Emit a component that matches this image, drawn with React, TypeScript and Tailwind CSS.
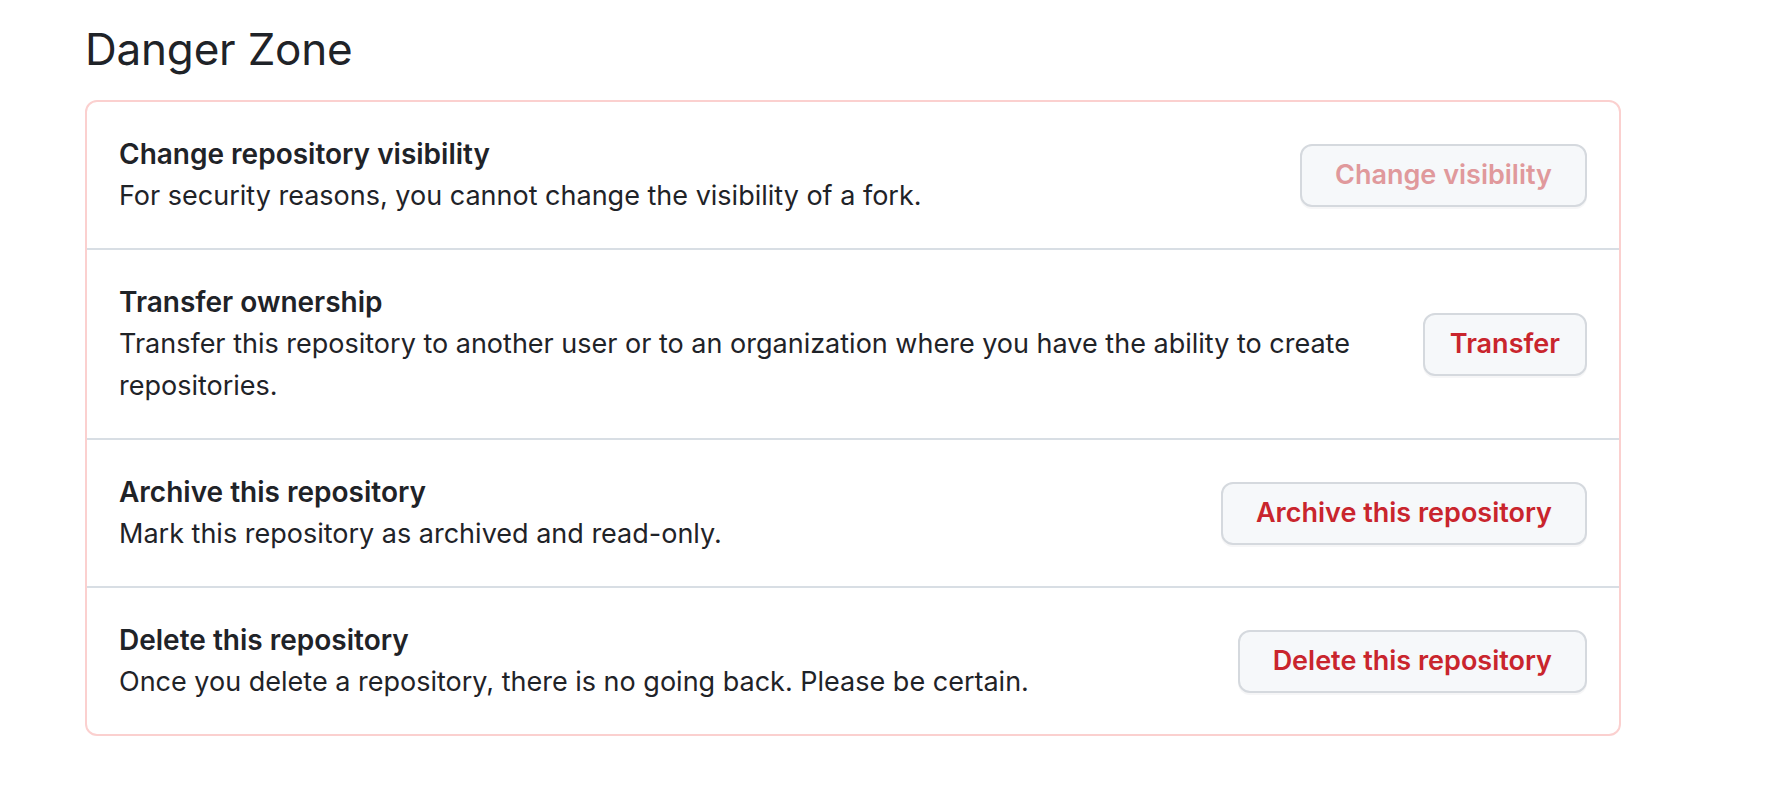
const rows = [
  {
    title: "Change repository visibility",
    body: "For security reasons, you cannot change the visibility of a fork.",
    action: "Change visibility",
    disabled: true,
  },
  {
    title: "Transfer ownership",
    body: "Transfer this repository to another user or to an organization where you have the ability to create repositories.",
    action: "Transfer",
    compact: true,
  },
  {
    title: "Archive this repository",
    body: "Mark this repository as archived and read-only.",
    action: "Archive this repository",
  },
  {
    title: "Delete this repository",
    body: "Once you delete a repository, there is no going back. Please be certain.",
    action: "Delete this repository",
  },
];

export default function App() {
  return (
    <div className="min-h-screen bg-white pl-[85px] pt-[17px] font-['Inter','Liberation_Sans',sans-serif] text-[#1f2328]">
      <h2 className="mb-[19px] text-[44px] leading-[64px] font-normal tracking-[-0.2px]">Danger Zone</h2>
      <div className="w-[1536px] rounded-[12px] border-2 border-[#fbd0cf]">
        {rows.map((row, i) => (
          <div
            key={row.title}
            className={
              "flex items-center px-[32px] py-[31px] " +
              (i > 0 ? "border-t-2 border-[#d8dee4]" : "")
            }
          >
            <div className="mr-[48px] flex-1">
              <div className="text-[28px] leading-[42px] font-semibold">{row.title}</div>
              <div className="text-[27px] leading-[42px]">{row.body}</div>
            </div>
            <button
              className={
                "h-[63px] shrink-0 rounded-[12px] border-2 border-[#d5d9de] bg-[#f6f8fa] text-[27px] font-semibold shadow-[0_2px_0_rgba(31,35,40,0.04)] " +
                (row.compact ? "px-[25px] " : "px-[33px] ") +
                (row.disabled ? "text-[#e0999c]" : "text-[#c9252d]")
              }
            >
              {row.action}
            </button>
          </div>
        ))}
      </div>
    </div>
  );
}
